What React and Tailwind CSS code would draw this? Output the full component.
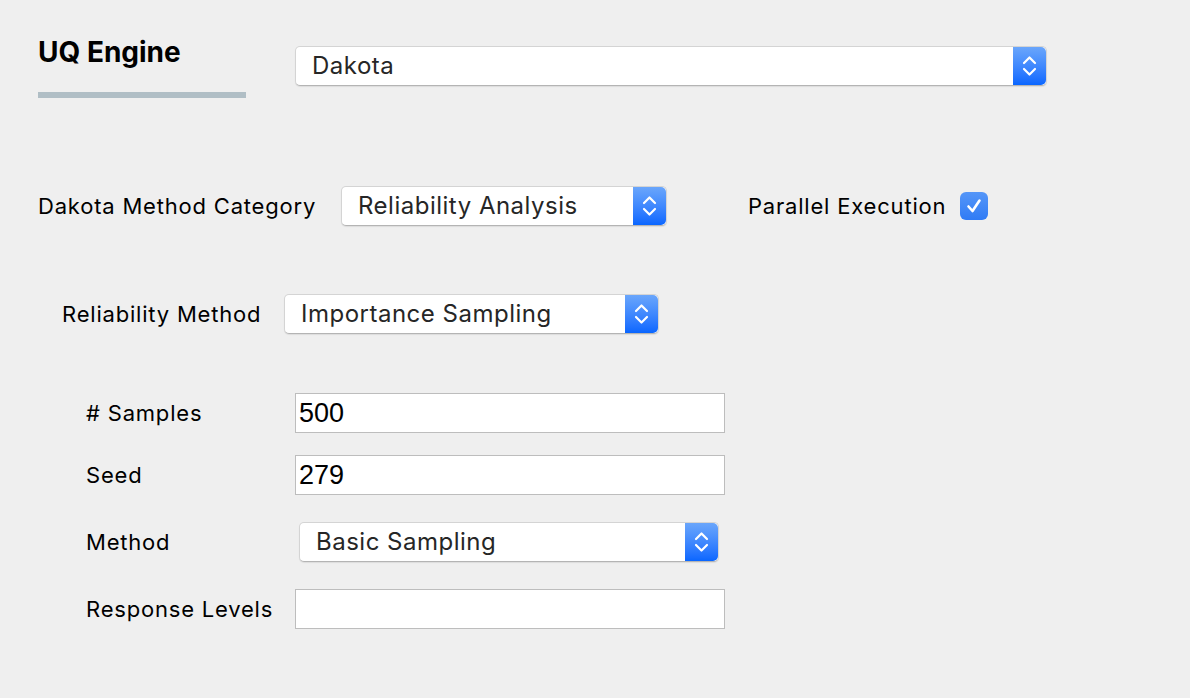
import React from 'react';

const font = { fontFamily: 'Inter, "Liberation Sans", sans-serif' };

const Stepper = () => (
  <div className="w-[33px] h-full rounded-r-[5px] bg-gradient-to-b from-[#6aa6fb] to-[#0866ff] flex items-center justify-center">
    <svg width="33" height="40" viewBox="0 0 33 40" fill="none" stroke="white" strokeWidth="2.2" strokeLinecap="round" strokeLinejoin="round">
      <path d="M11 17 L16.5 11.5 L22 17" />
      <path d="M11 23 L16.5 28.5 L22 23" />
    </svg>
  </div>
);

const Select = ({ value, width }) => (
  <div
    className="h-[40px] flex items-stretch rounded-[5px] bg-white border border-[#d4d4d4] border-b-[#b4b4b4] shadow-[0_1px_1px_rgba(0,0,0,0.08)]"
    style={{ width }}
  >
    <div className="flex-1 flex items-center pl-[16px] text-[24px] tracking-[0.5px] text-[#262626]">{value}</div>
    <Stepper />
  </div>
);

const Input = ({ value }) => (
  <div className="w-[430px] h-[40px] bg-white border border-[#bdbdbd] flex items-center pl-[3px] text-[27px] text-black font-['Liberation_Sans',sans-serif]">
    {value}
  </div>
);

const Label = ({ children, w }) => (
  <div className={`${w} text-[22px] tracking-[0.8px]`}>{children}</div>
);

export default function App() {
  return (
    <div className="w-[1190px] h-[698px] bg-[#efefef] overflow-hidden pl-[38px] text-black" style={font}>
      {/* header */}
      <div className="flex items-start pt-[35px]">
        <div className="w-[208px]">
          <div className="text-[28px] leading-[34px] font-bold">UQ Engine</div>
          <div className="mt-[23px] h-[6px] bg-[#b0bec5]" />
        </div>
        <div className="ml-[49px] mt-[11px]">
          <Select value="Dakota" width={752} />
        </div>
      </div>

      {/* method category */}
      <div className="flex items-center h-[40px] mt-[88px]">
        <Label w="w-[303px]">Dakota Method Category</Label>
        <Select value="Reliability Analysis" width={326} />
        <Label w="ml-[81px] w-[212px]">Parallel Execution</Label>
        <div className="w-[28px] h-[28px] rounded-[6px] bg-gradient-to-b from-[#5596f8] to-[#2f7bf5] flex items-center justify-center">
          <svg width="20" height="20" viewBox="0 0 20 20" fill="none" stroke="white" strokeWidth="2.6" strokeLinecap="round" strokeLinejoin="round">
            <path d="M4.5 10.5 L8.5 15 L15.5 4.5" />
          </svg>
        </div>
      </div>

      {/* reliability method */}
      <div className="flex items-center h-[40px] mt-[68px] pl-[24px]">
        <Label w="w-[222px]">Reliability Method</Label>
        <Select value="Importance Sampling" width={375} />
      </div>

      {/* parameters */}
      <div className="pl-[48px]">
        <div className="flex items-center h-[40px] mt-[59px]">
          <Label w="w-[209px]"># Samples</Label>
          <Input value="500" />
        </div>
        <div className="flex items-center h-[40px] mt-[22px]">
          <Label w="w-[209px]">Seed</Label>
          <Input value="279" />
        </div>
        <div className="flex items-center h-[40px] mt-[27px]">
          <Label w="w-[213px]">Method</Label>
          <Select value="Basic Sampling" width={420} />
        </div>
        <div className="flex items-center h-[40px] mt-[27px]">
          <Label w="w-[209px]">Response Levels</Label>
          <Input value="" />
        </div>
      </div>
    </div>
  );
}
